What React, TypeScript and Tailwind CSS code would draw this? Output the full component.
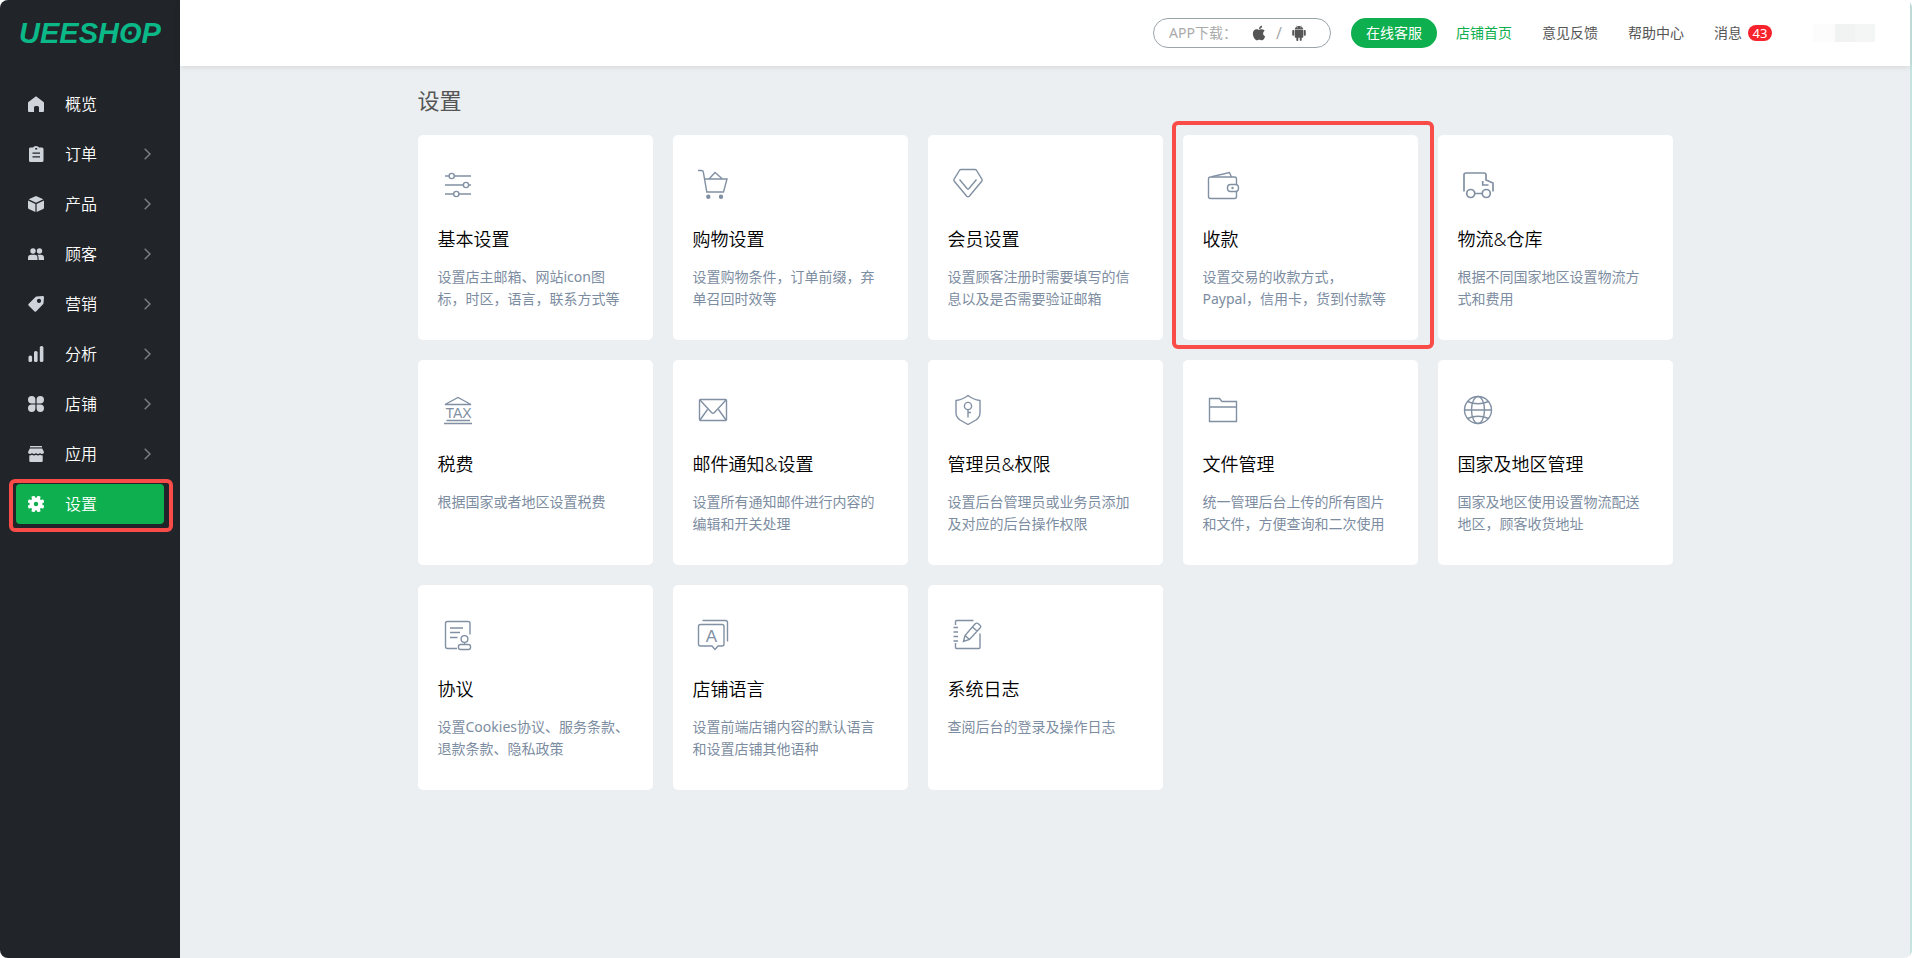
import type { ReactNode } from 'react';
import { clsx } from 'clsx';
import { AiFillAndroid, AiFillApple } from 'react-icons/ai';

type NavItem = {
  label: string;
  icon: ReactNode;
  hasChildren?: boolean;
  active?: boolean;
};

type SettingCard = {
  title: string;
  desc: string;
  icon: ReactNode;
  highlighted?: boolean;
};

const navItems: NavItem[] = [
  {
    label: '概览',
    icon: <path d="M8 0.3 L15.6 6 Q16 6.400 16 7 V15 Q16 16 15 16 H11 V11.500 Q11 10 9.500 10 H7.500 Q6 10 6 11.500 V16 H1 Q0 16 0 15 V7 Q0 6.400 0.400 6 Z" />,
  },
  {
    label: '订单',
    hasChildren: true,
    icon: (
      <path
        fillRule="evenodd"
        d="M2 1.500 H5 Q5.500 0 8 0 Q10.500 0 11 1.500 H14 Q15.500 1.500 15.500 3 V14.500 Q15.500 16 14 16 H2.500 Q1 16 1 14.500 V3 Q1 1.500 2 1.500 Z M7.200 2 V3.600 H9.200 V2 Z M4.500 6.500 V7.700 H12 V6.500 Z M4.500 10.300 V11.500 H12 V10.300 Z"
      />
    ),
  },
  {
    label: '产品',
    hasChildren: true,
    icon: (
      <>
        <path d="M8 0 L15.300 3.300 L8 6.800 L0.700 3.300 Z" />
        <path d="M0 4.600 L7.400 8 V16 L0.800 13 Q0 12.600 0 11.800 Z" />
        <path d="M16 4.600 L8.600 8 V16 L15.200 13 Q16 12.600 16 11.800 Z" />
      </>
    ),
  },
  {
    label: '顾客',
    hasChildren: true,
    icon: (
      <>
        <circle cx="5" cy="5" r="2.700" />
        <circle cx="11.500" cy="5" r="2.700" />
        <path d="M0 14 V12 Q0 8.700 3.300 8.700 H6.500 Q9.500 8.700 9.500 12 V14 Z" />
        <path d="M10.600 14 V12 Q10.600 10 9.400 8.700 H12.700 Q16 8.700 16 12 V14 Z" />
      </>
    ),
  },
  {
    label: '营销',
    hasChildren: true,
    icon: (
      <path
        fillRule="evenodd"
        d="M8.500 0.600 L14.800 0 Q16 0 16 1.200 L15.500 7.200 Q15.400 7.800 15 8.200 L8 15.500 Q7.300 16 6.600 15.500 L0.500 9.400 Q0 8.700 0.500 8 L7.500 1.100 Q7.900 0.700 8.500 0.600 Z M11 2.800 A2.100 2.100 0 1 0 11.010 2.800 Z"
      />
    ),
  },
  {
    label: '分析',
    hasChildren: true,
    icon: (
      <>
        <rect x="0.500" y="9.500" width="3.600" height="6.500" rx="1.600" />
        <rect x="6" y="5" width="3.600" height="11" rx="1.600" />
        <rect x="11.800" y="0" width="3.600" height="16" rx="1.600" />
      </>
    ),
  },
  {
    label: '店铺',
    hasChildren: true,
    icon: (
      <>
        <path d="M3.700 0 A3.700 3.700 0 0 0 3.700 7.400 H7.400 V3.700 A3.700 3.700 0 0 0 3.700 0 Z" />
        <path d="M12.300 0 A3.700 3.700 0 0 1 12.300 7.400 H8.600 V3.700 A3.700 3.700 0 0 1 12.300 0 Z" />
        <path d="M3.700 16 A3.700 3.700 0 0 1 3.700 8.600 H7.400 V12.300 A3.700 3.700 0 0 1 3.700 16 Z" />
        <path d="M12.300 16 A3.700 3.700 0 0 0 12.300 8.600 H8.600 V12.300 A3.700 3.700 0 0 0 12.300 16 Z" />
      </>
    ),
  },
  {
    label: '应用',
    hasChildren: true,
    icon: (
      <>
        <path d="M2 0 H14 V1.400 H2 Z" />
        <path d="M1.800 2.600 H14.200 L16 6 Q16 8 14 8 Q12.700 8 12 7 Q11.300 8 10 8 Q8.700 8 8 7 Q7.300 8 6 8 Q4.700 8 4 7 Q3.300 8 2 8 Q0 8 0 6 Z" />
        <path d="M1.300 9.500 Q3 9.500 4 8.800 Q6 10 8 8.800 Q10 10 12 8.800 Q13 9.500 14.700 9.500 V15 Q14.700 16 13.700 16 H2.300 Q1.300 16 1.300 15 Z" />
      </>
    ),
  },
  {
    label: '设置',
    active: true,
    icon: (
      <>
        <circle cx="8" cy="8" r="4.300" fill="none" stroke="white" strokeWidth="4.200" />
        {[22.5, 67.5, 112.5, 157.5].map((deg) => (
          <g key={deg} transform={`rotate(${deg} 8 8)`}>
            <rect x="6.300" y="-0.500" width="3.400" height="3" rx="0.800" />
            <rect x="6.300" y="13.500" width="3.400" height="3" rx="0.800" />
          </g>
        ))}
      </>
    ),
  },
];

const cards: SettingCard[] = [
  {
    title: '基本设置',
    desc: '设置店主邮箱、网站icon图标，时区，语言，联系方式等',
    icon: (
      <>
        <path d="M7 11 H11 M16.500 11 H33 M7 20 H25.500 M31 20 H33 M7 29 H15.500 M21 29 H33" />
        <circle cx="13.700" cy="11" r="2.600" />
        <circle cx="28" cy="20" r="2.600" />
        <circle cx="18.300" cy="29" r="2.600" />
      </>
    ),
  },
  {
    title: '购物设置',
    desc: '设置购物条件，订单前缀，弃单召回时效等',
    icon: (
      <>
        <path d="M5 5.500 H8.500 Q10 5.500 10.300 7 L13.800 27 H30.500 L34 14 H11.500 M16 14 L22 7.500 L29.500 14" />
        <circle cx="15.300" cy="31.800" r="1.500" fill="currentColor" />
        <circle cx="28" cy="31.800" r="1.500" fill="currentColor" />
      </>
    ),
  },
  {
    title: '会员设置',
    desc: '设置顾客注册时需要填写的信息以及是否需要验证邮箱',
    icon: (
      <>
        <path d="M13 4.500 H27 Q28 4.500 28.600 5.500 L33.900 14.200 Q34.500 15 33.900 16 L21.500 31 Q20 32.500 18.500 31 L6.100 16 Q5.500 15 6.100 14.200 L11.400 5.500 Q12 4.500 13 4.500 Z" />
        <path d="M11.500 14.500 L19.200 23.800 Q20 24.500 20.800 23.800 L28.500 14.500" />
      </>
    ),
  },
  {
    title: '收款',
    desc: '设置交易的收款方式，Paypal，信用卡，货到付款等',
    highlighted: true,
    icon: (
      <>
        <path d="M33.500 19.500 V14 Q33.500 12 31.500 12 H7.500 Q5.500 12 5.500 14 V31.500 Q5.500 33.500 7.500 33.500 H31.500 Q33.500 33.500 33.500 31.500 V26.500" />
        <path d="M8.500 11.800 L26.500 7.500 L28.500 12" />
        <rect x="24.500" y="19.500" width="11" height="7" rx="3" />
        <circle cx="29.500" cy="23" r="0.500" />
      </>
    ),
  },
  {
    title: '物流&仓库',
    desc: '根据不同国家地区设置物流方式和费用',
    icon: (
      <g strokeWidth="1.700">
        <path d="M6 26.500 V10 Q6 8 8 8 H26 Q28 8 28 10 V15 L35 18 V26.500 M24.700 16 V20 H30.500 M17 28.500 H24" />
        <circle cx="12.700" cy="28.500" r="4" />
        <circle cx="28.300" cy="28.500" r="4" />
      </g>
    ),
  },
  {
    title: '税费',
    desc: '根据国家或者地区设置税费',
    icon: (
      <>
        <path d="M7 14.500 L20 7.500 L33 14.500 Z M8.500 30.500 H32 M6 33.500 H34" />
        <text
          x="20.500"
          y="27.500"
          textAnchor="middle"
          fill="currentColor"
          stroke="none"
          className="font-['Liberation_Sans',sans-serif] text-[14px]"
        >
          TAX
        </text>
      </>
    ),
  },
  {
    title: '邮件通知&设置',
    desc: '设置所有通知邮件进行内容的编辑和开关处理',
    icon: (
      <>
        <rect x="6.500" y="9.500" width="27" height="21" rx="1" />
        <path d="M7 10 L18.500 22.500 Q20 24 21.500 22.500 L33 10 M7 30 L14.500 19.500 M33 30 L25.500 19.500" />
      </>
    ),
  },
  {
    title: '管理员&权限',
    desc: '设置后台管理员或业务员添加及对应的后台操作权限',
    icon: (
      <>
        <path d="M20 5.500 Q25 9.500 32 10.500 V23 Q32 27 28 30 L20 34.500 L12 30 Q8 27 8 23 V10.500 Q15 9.500 20 5.500 Z" />
        <circle cx="20" cy="16" r="3.600" />
        <path d="M20 19.600 V27.500 M20 22.500 H23" />
      </>
    ),
  },
  {
    title: '文件管理',
    desc: '统一管理后台上传的所有图片和文件，方便查询和二次使用',
    icon: <path d="M6.500 31.500 V8.500 H16.500 L19 11.500 H33.500 V31.500 Z M6.500 17 H33.500" />,
  },
  {
    title: '国家及地区管理',
    desc: '国家及地区使用设置物流配送地区，顾客收货地址',
    icon: (
      <>
        <circle cx="20" cy="20" r="13.500" />
        <ellipse cx="20" cy="20" rx="6.500" ry="13.500" />
        <path d="M6.500 20 H33.500 M9.500 11.500 Q20 16 30.500 11.500 M9.500 28.500 Q20 24 30.500 28.500" />
      </>
    ),
  },
  {
    title: '协议',
    desc: '设置Cookies协议、服务条款、退款条款、隐私政策',
    icon: (
      <>
        <path d="M19 33.500 H9.500 Q7.500 33.500 7.500 31.500 V8.500 Q7.500 6.500 9.500 6.500 H30 Q32 6.500 32 8.500 V19.500" />
        <path d="M12 13 H25 M12 17.500 H22 M12 22.500 H19.500 M26.500 27.500 V29.500" />
        <circle cx="26.500" cy="24" r="3.400" />
        <rect x="20.500" y="29.500" width="12" height="5" rx="2" />
      </>
    ),
  },
  {
    title: '店铺语言',
    desc: '设置前端店铺内容的默认语言和设置店铺其他语种',
    icon: (
      <>
        <path d="M9.500 5.500 H32.500 Q34.500 5.500 34.500 7.500 V26.500" />
        <path d="M7.500 9.500 H29 Q31 9.500 31 11.500 V29 Q31 31 29 31 H25 L22 34.500 L19 31 H7.500 Q5.500 31 5.500 29 V11.500 Q5.500 9.500 7.500 9.500 Z" />
        <text
          x="18.500"
          y="26.500"
          textAnchor="middle"
          fill="currentColor"
          stroke="none"
          className="font-['Liberation_Sans',sans-serif] text-[17px]"
        >
          A
        </text>
      </>
    ),
  },
  {
    title: '系统日志',
    desc: '查阅后台的登录及操作日志',
    icon: (
      <>
        <path d="M25.500 5.500 H8.500 Q7.500 5.500 7.500 6.500 V10 M7.500 28 V32.500 Q7.500 33.500 8.500 33.500 H31 Q32 33.500 32 32.500 V18.500" />
        <path d="M5.500 12.500 H10 M5.500 17 H10 M5.500 21.500 H10 M5.500 26 H10" />
        <path d="M15.500 26.500 L17 20.500 L27 9 Q28.500 7.500 30 8.500 L32 10.200 Q33.500 11.500 32 13 L21.500 24.500 Z M17 20.500 L21.500 24.500 M24.500 12 L29 16" />
      </>
    ),
  },
];

const topLinks = ['意见反馈', '帮助中心'];

const Sidebar = () => (
  <aside className="w-[180px] shrink-0 bg-[#212428]">
    <a href="#" className="block pl-[19px] pt-[17px] text-[29px] leading-8 font-bold italic text-[#0bb988] font-['Liberation_Sans',sans-serif]">
      UEESH
      <span className="relative">
        O
        <span className="absolute left-1/2 top-1/2 size-1 -translate-1/2 rounded-full bg-[#0bb988]" />
      </span>
      P
    </a>

    <nav className="mt-[35px] flex flex-col gap-2.5 px-4">
      {navItems.map((item) => (
        <a
          key={item.label}
          href="#"
          className={clsx(
            'relative flex h-10 items-center rounded pl-3 pr-[13px] text-base font-[350] text-white',
            item.active && 'bg-[#0eaf4e]'
          )}
        >
          <svg viewBox="0 0 16 16" className={clsx('size-4', item.active ? 'fill-white' : 'fill-[#cfd4db]')}>
            {item.icon}
          </svg>
          <span className="ml-[21px] grow">{item.label}</span>
          {item.hasChildren && (
            <svg viewBox="0 0 7 12" className="h-3 w-[7px] fill-none stroke-[#7d8084]">
              <path d="M0.700 0.700 L6 6 L0.700 11.300" strokeWidth="1.400" />
            </svg>
          )}
          {item.active && (
            <span className="absolute -left-[7px] -right-[9px] -top-[5px] -bottom-2 rounded-md border-4 border-[#f94b48]" />
          )}
        </a>
      ))}
    </nav>
  </aside>
);

const TopBar = () => (
  <header className="relative flex h-[66px] items-center justify-end bg-white pr-[35px] text-sm text-[#555] shadow-[0_1px_6px_rgba(0,0,0,0.1)]">
    <div className="mr-5 flex h-[30px] w-[178px] items-center rounded-full border border-[#9aa5a9] pl-[15px] text-[#aaa]">
      <span className="w-[81px]">APP下载：</span>
      <a href="#" aria-label="iOS" className="text-[#555]">
        <AiFillApple size={18} />
      </a>
      <span className="w-[22px] text-center text-base">/</span>
      <a href="#" aria-label="Android" className="text-[#555]">
        <AiFillAndroid size={18} />
      </a>
    </div>
    <button type="button" className="mr-1 h-[30px] w-[86px] rounded-full bg-[#0eaf4e] text-white">
      在线客服
    </button>
    <a href="#" className="px-[15px] text-[#0eaf4e]">
      店铺首页
    </a>
    {topLinks.map((label) => (
      <a key={label} href="#" className="px-[15px]">
        {label}
      </a>
    ))}
    <a href="#" className="flex items-center gap-1.5 pl-[15px]">
      消息
      <span className="h-4 w-6 rounded-full bg-[#f8222c] text-center text-[13px] leading-4 text-white">43</span>
    </a>
    {/* masked account name */}
    <div className="ml-[41px] flex h-[18px]">
      <span className="w-[22px] bg-[#fcfcfc]" />
      <span className="w-5 bg-[#f0f3f2]" />
      <span className="w-5 bg-[#f4f5f5]" />
    </div>
  </header>
);

const Card = ({ title, desc, icon, highlighted }: SettingCard) => (
  <a href="#" className="relative block h-[205px] rounded-[5px] bg-white px-5 pt-[30px]">
    <svg viewBox="0 0 40 40" className="size-10 fill-none stroke-current text-[#8190a3]" strokeWidth="1.400">
      {icon}
    </svg>
    <h2 className="mt-5 text-lg leading-7 font-[350] text-black">{title}</h2>
    <p className="mt-[13px] text-sm leading-[22px] text-[#7d8da1]">{desc}</p>
    {highlighted && (
      <span className="absolute -left-[11px] -right-4 -top-3.5 -bottom-[9px] z-10 rounded-md border-4 border-[#f94b48]" />
    )}
  </a>
);

const App = () => {
  return (
    <div className="min-h-screen bg-white font-['Noto_Sans','Noto_Sans_CJK_SC',sans-serif]">
      <div className="flex min-h-screen overflow-hidden rounded-lg bg-[#ebeff2]">
        <Sidebar />
        <div className="flex min-w-0 grow flex-col border-r-2 border-[#c5e3df]">
          <TopBar />
          <main className="mx-auto w-full max-w-[1255px] pb-10 pt-[19px]">
            <h1 className="text-[22px] leading-[30px] text-[#555]">设置</h1>
            <div className="mt-5 grid grid-cols-5 gap-5">
              {cards.map((card) => (
                <Card key={card.title} {...card} />
              ))}
            </div>
          </main>
        </div>
      </div>
    </div>
  );
};

export default App;
